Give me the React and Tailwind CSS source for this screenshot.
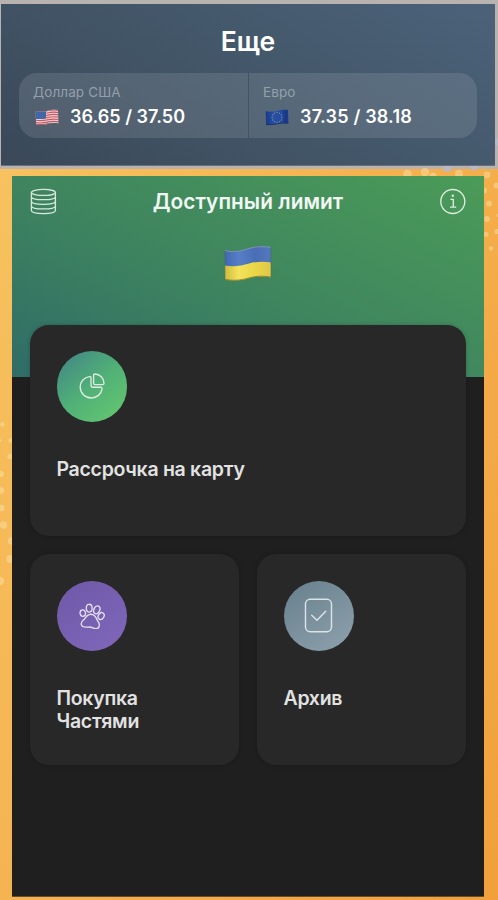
import React from 'react';

const FONT = "font-['Inter','Liberation_Sans',sans-serif]";

function Dots() {
  const dots = [
    [407.5, 174, 4.3], [425, 172, 4.3], [433, 176, 3.5], [459, 174, 4],
    [487, 175, 3.4], [496.5, 185.5, 3], [484, 190.5, 3], [489, 203.5, 3],
    [498.5, 215.5, 2], [487, 219, 2.9], [486, 234.5, 2.5], [497, 231.5, 2.6], [491, 248.5, 2.3],
    [2.3, 424.5, 2.3], [0, 440.5, 1.4], [10.5, 440.5, 2.3], [10, 456.5, 2.7], [1, 474, 3],
    [1, 490.5, 3.3], [1.3, 508, 3.3], [3.5, 525, 3.7], [11.5, 541, 3.8], [10.3, 559, 4], [0, 581, 4.2],
  ];
  const shaded = [[447.5, 168.3, 4], [474, 166.5, 4], [497.5, 142, 3.4]];
  return (
    <svg className="pointer-events-none absolute inset-0 h-[900px] w-[498px]" viewBox="0 0 498 900">
      <defs>
        <clipPath id="edge">
          <path d="M0 166H495V0H498V172H0Z" />
        </clipPath>
      </defs>
      {dots.map(([x, y, r]) => (
        <circle key={`${x}-${y}`} cx={x} cy={y} r={r} fill="#fadfa8" fillOpacity="0.5" />
      ))}
      <g clipPath="url(#edge)">
        {shaded.map(([x, y, r]) => (
          <circle key={x} cx={x} cy={y} r={r} fill="#b9b9c8" fillOpacity="0.85" />
        ))}
      </g>
    </svg>
  );
}

function UsFlag() {
  return (
    <svg className="h-[17px] w-6" viewBox="0 0 24 17">
      <defs>
        <clipPath id="us">
          <path d="M.7 2C5 3.2 8 3 12 2 16 .8 19 .6 23 1.1L23.4 14.4C19 13.6 16 14 12.5 15 8 16.2 5 16.2 1.1 15.7Z" />
        </clipPath>
      </defs>
      <g clipPath="url(#us)">
        <rect width="24" height="17" fill="#e6d8dc" />
        {[1.8, 4.1, 6.4, 8.7, 11, 13.3, 15.5].map((y) => (
          <path key={y} d={`M0 ${y}C4 ${y + 1.1} 8 ${y + 0.8} 12 ${y - 0.1} 16 ${y - 1.1} 20 ${y - 1.2} 24 ${y - 0.5}`} fill="none" stroke="#cf5560" strokeWidth="1.2" />
        ))}
        <path d="M0 1C4 3 8 2.8 11 2.1V9.2C8 10 4 10.2 0 9.4Z" fill="#3d65a5" />
        <path d="M2 4.2H10M2 6.2H10M2 8.2H10" stroke="#5f82b5" strokeWidth=".6" strokeDasharray=".7 1" />
        <path d="M.7 15.8C8 16.5 14 13.4 23.4 14.5" fill="none" stroke="#62545f" strokeWidth=".8" />
      </g>
    </svg>
  );
}

function EuFlag() {
  const stars = Array.from({ length: 12 }, (_, i) => i * Math.PI / 6);
  return (
    <svg className="h-[17px] w-6" viewBox="0 0 24 17">
      <defs>
        <linearGradient id="eu">
          <stop offset="0" stopColor="#183887" />
          <stop offset=".35" stopColor="#2650a7" />
          <stop offset=".7" stopColor="#2549a0" />
          <stop offset=".88" stopColor="#183685" />
          <stop offset="1" stopColor="#203e8c" />
        </linearGradient>
      </defs>
      <path d="M.7 2C5 3.2 8 3 12 2 16 .8 19 .6 23 1.1L23.4 14.4C19 13.6 16 14 12.5 15 8 16.2 5 16.2 1.1 15.7Z" fill="url(#eu)" />
      <path d="M1.1 15.6C8 16.4 14 13.3 23.4 14.3" fill="none" stroke="#21305f" strokeWidth=".8" />
      {stars.map((a) => (
        <circle key={a} cx={12 + 4.9 * Math.cos(a)} cy={8.4 + 5 * Math.sin(a)} r=".6" fill="#99a08c" />
      ))}
    </svg>
  );
}

function UaFlag() {
  return (
    <svg className="h-9 w-12" viewBox="0 0 48 36">
      <defs>
        <linearGradient id="blue">
          <stop offset="0" stopColor="#4267b0" />
          <stop offset=".3" stopColor="#567fc8" />
          <stop offset=".65" stopColor="#496eb5" />
          <stop offset="1" stopColor="#5478bd" />
        </linearGradient>
        <linearGradient id="yellow">
          <stop offset="0" stopColor="#cfbb3f" />
          <stop offset=".3" stopColor="#f3e35b" />
          <stop offset=".65" stopColor="#ead748" />
          <stop offset="1" stopColor="#dfc746" />
        </linearGradient>
      </defs>
      <path d="M.8 4.2C9 7 18 4.5 25 2.3 32 .1 39 0 47 1.2V17.2C40 15.6 32 16.2 25 18.2 18 20.2 9 21.9.8 20Z" fill="url(#blue)" />
      <path d="M.8 19.4C9 21.3 18 19.5 25 17.5 32 15.6 40 15 47 16.5V31.3C39 29.8 32 30.2 25 32.2 16 34.8 9 35 1 33.5Z" fill="url(#yellow)" />
      <path d="M1 33.4C9 34.8 16 34.6 25 32 32 30 39 29.6 47 31.1" fill="none" stroke="#93832f" strokeWidth="1" />
      <path d="M.8 4.4C9 7 18 4.7 25 2.5 32 .3 39 .2 47 1.4" fill="none" stroke="#7d92ae" strokeWidth="1" />
      <path d="M1.1 4.5V33.2M46.8 1.5V31" stroke="#465c45" strokeOpacity=".5" strokeWidth=".7" />
    </svg>
  );
}

function Rate({ name, value, flag, className, valueClass }) {
  return (
    <div className={`flex flex-col pt-[10px] ${className}`}>
      <div className="h-[18px] text-[13.5px] leading-[18px] tracking-[0.12px] text-[#93a0aa]">{name}</div>
      <div className="mt-[4px] flex h-6 items-center">
        <span className="ml-[2px]">{flag}</span>
        <span className={`ml-[11px] whitespace-nowrap text-[18px] font-semibold leading-6 text-white ${valueClass}`}>{value}</span>
      </div>
    </div>
  );
}

function Card({ children, icon, circle, className }) {
  return (
    <div className={`rounded-[19px] bg-[#282828] pl-[26.5px] pt-[26.5px] shadow-[0_0_4px_rgba(0,0,0,0.2)] ${className}`}>
      <div className={`flex size-[70.5px] items-center justify-center rounded-full ${circle}`}>{icon}</div>
      <div className="mt-[36px] text-[19.5px] font-semibold leading-[23px] tracking-[-0.29px] text-[#e2e2e2]">{children}</div>
    </div>
  );
}

const PieIcon = () => (
  <svg className="size-[26px]" viewBox="0 0 26 26" fill="none" stroke="#dcece2" strokeWidth="1.35" strokeLinejoin="round">
    <path d="M10.5 3.6C5.2 4.3 1.2 8.6 1.2 14A10.9 10.9 0 0 0 12.2 25C17.8 25 22.4 21.1 23 15.8Q23.1 14.2 21.6 14.2H14Q12 14.2 12 12V4.9Q12 3.5 10.5 3.6Z" />
    <path d="M14.6 2.1Q14.6 1 15.7 1C21 1 25 5.1 25 10.3Q25 11.6 23.7 11.6H16Q14.6 11.6 14.6 10.2Z" />
  </svg>
);

const PawIcon = () => (
  <svg className="size-[26px]" viewBox="0 0 26 26" fill="none" stroke="#e4dfee" strokeWidth="1.35">
    <ellipse cx="3.8" cy="10.1" rx="2.7" ry="3.2" transform="rotate(-12 3.8 10.1)" />
    <ellipse cx="10.2" cy="5.2" rx="2.9" ry="3.9" transform="rotate(-2 10.2 5.2)" />
    <ellipse cx="17.8" cy="6.8" rx="2.9" ry="4.1" transform="rotate(24 17.8 6.8)" />
    <ellipse cx="22.1" cy="13.1" rx="2.8" ry="3.6" transform="rotate(32 22.1 13.1)" />
    <path d="M9.5 11.8C7.6 12.4 7 14.5 5.2 16.2 2.7 18.2 1.6 20.3 2.6 22.3 4 25.1 7.2 24.1 10 24 13.3 23.8 14.3 25.9 17.2 25.7 19.8 25.5 20.7 23.3 20.2 20.8 19.9 19.3 18.7 18.4 18.2 17 17.5 15 16.5 12.8 14.3 11.8 12.6 11 11 11.2 9.5 11.8Z" />
  </svg>
);

const ArchiveIcon = () => (
  <svg className="h-[35px] w-[29px]" viewBox="0 0 29 35" fill="none" stroke="#dce3e6" strokeWidth="1.45" strokeLinecap="round">
    <rect x="1.5" y="1.3" width="26" height="32.4" rx="4.6" />
    <path d="M7.7 17.2 13 22.3 21.7 13.3" />
  </svg>
);

export default function App() {
  return (
    <div className={`relative flex h-[900px] w-[498px] flex-col overflow-hidden bg-[linear-gradient(115deg,#f7c562_0%,#f5b350_48%,#f1a03b_100%)] ${FONT}`}>
      <div className="h-[169px] w-full bg-[#b9b3b0] pl-px pt-[4px]">
        <header className="flex h-[162px] w-[494px] flex-col items-center border-b border-[#667080] bg-[linear-gradient(32deg,#3a4858_0%,#425567_45%,#4b6279_100%)]">
          <h1 className="mt-[19px] text-[26.5px] font-semibold leading-9 text-white">Еще</h1>
          <div className="mt-[14px] flex h-[65px] w-[458px] overflow-hidden rounded-[18px] bg-[#ffffff1c]">
            <Rate name="Доллар США" value="36.65 / 37.50" flag={<UsFlag />} className="w-[229px] pl-[14px]" valueClass="tracking-[0.03px]" />
            <div className="h-full w-px bg-[#43546a]" />
            <Rate name="Евро" value="37.35 / 38.18" flag={<EuFlag />} className="flex-1 pl-[14px]" valueClass="tracking-[0.2px]" />
          </div>
        </header>
      </div>
      <Dots />
      <main className="relative ml-[12px] mt-[7px] h-[721px] w-[472px] border-b border-[#654b30] bg-[linear-gradient(26deg,#2f6c67_0%,#3e845f_45%,#4b9b58_100%)] bg-[length:100%_202px] bg-no-repeat">
        <div className="flex h-full flex-col bg-[linear-gradient(#0000_201.5px,#1f1f1f_201.5px)]">
          <div className="flex h-[51px] items-center justify-between px-[18px]">
            <svg className="h-[27px] w-[27px]" viewBox="0 0 27 27" fill="none" stroke="#d9e8df" strokeWidth="1.3">
              <ellipse cx="13.4" cy="4.4" rx="12" ry="3" />
              <path d="M1.4 4.4V22.6C1.4 26.6 25.4 26.6 25.4 22.6V4.4M1.4 8.7C1.4 12.7 25.4 12.7 25.4 8.7M1.4 13.3C1.4 17.3 25.4 17.3 25.4 13.3M1.4 17.9C1.4 21.9 25.4 21.9 25.4 17.9" />
            </svg>
            <h2 className="pt-px text-[20.8px] font-semibold leading-7 tracking-[0.05px] text-[#f1f7f3]">Доступный лимит</h2>
            <svg className="size-[27px]" viewBox="0 0 27 27" fill="none" stroke="#dcecdf" strokeWidth="1.35">
              <circle cx="13.8" cy="13.5" r="12" />
              <circle cx="13.8" cy="7.8" r="1.2" fill="#dcecdf" stroke="none" />
              <path d="M11.4 11.4H14.3V19M11 19.1H17.2" />
            </svg>
          </div>
          <div className="mt-[19px] flex justify-center"><UaFlag /></div>
          <div className="mt-[42.5px] grid grid-cols-2 gap-[18px] px-[18px]">
            <Card className="col-span-2 h-[211.5px]" circle="bg-[linear-gradient(140deg,#438c83_10%,#51b077_50%,#62c570_90%)]" icon={<PieIcon />}>Рассрочка на карту</Card>
            <Card className="h-[211px]" circle="bg-[linear-gradient(145deg,#6f58a8,#8067ba)]" icon={<PawIcon />}>Покупка<br />Частями</Card>
            <Card className="h-[211px]" circle="bg-[linear-gradient(145deg,#677f8d,#8ea2ad)]" icon={<ArchiveIcon />}>Архив</Card>
          </div>
        </div>
      </main>
    </div>
  );
}
